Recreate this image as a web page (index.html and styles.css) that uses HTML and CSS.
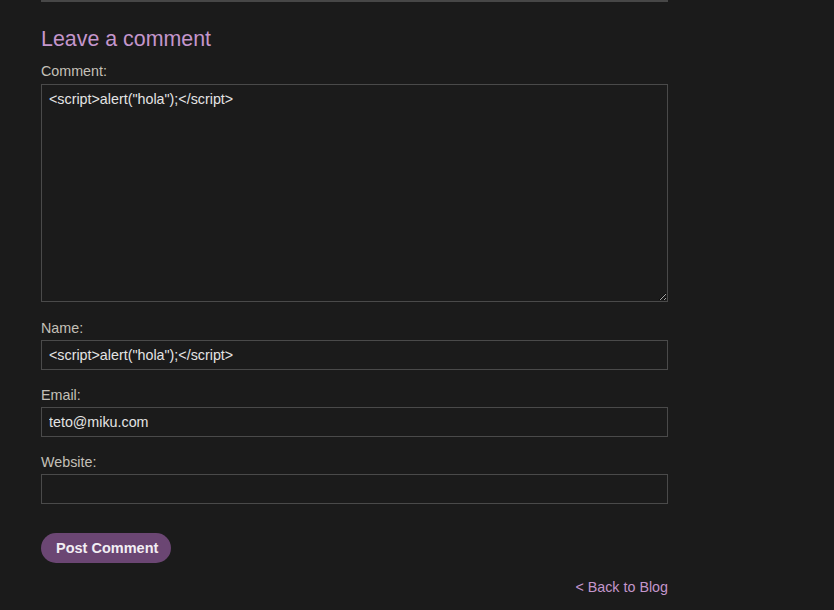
FILE: index.html
```html
<!DOCTYPE html>
<html lang="en">
<head>
<meta charset="utf-8">
<title>Leave a comment</title>
<link rel="stylesheet" href="styles.css">
</head>
<body>
<div class="page">
  <div class="main">
    <div class="divider"></div>
    <h2 class="title">Leave a comment</h2>
    <form class="comment-form">
      <div class="field field-comment">
        <label class="label" for="comment">Comment:</label>
        <textarea class="textarea" id="comment">&lt;script&gt;alert("hola");&lt;/script&gt;</textarea>
      </div>
      <div class="field">
        <label class="label" for="name">Name:</label>
        <input class="input" id="name" type="text" value="&lt;script&gt;alert(&quot;hola&quot;);&lt;/script&gt;">
      </div>
      <div class="field">
        <label class="label" for="email">Email:</label>
        <input class="input" id="email" type="text" value="teto@miku.com">
      </div>
      <div class="field">
        <label class="label" for="website">Website:</label>
        <input class="input" id="website" type="text" value="">
      </div>
      <button class="button" type="button">Post Comment</button>
    </form>
    <div class="back">
      <a class="back-link" href="#">&lt; Back to Blog</a>
    </div>
  </div>
</div>
</body>
</html>
```

FILE: styles.css
```css
html, body {
  margin: 0;
  padding: 0;
  background: #1b1b1b;
  color: #c8c8c8;
  font-family: "Liberation Sans", Arial, sans-serif;
}

.page {
  padding-left: 41px;
}

.main {
  width: 627px;
}

.divider {
  height: 2px;
  background: #474747;
}

.title {
  margin: 25px 0 12px;
  font-size: 21.4px;
  font-weight: normal;
  line-height: 24px;
  color: #c496cc;
}

.comment-form {
  display: flex;
  flex-direction: column;
}

.field {
  display: flex;
  flex-direction: column;
  margin-bottom: 17px;
}

.field-comment {
  margin-bottom: 18px;
}

.label {
  font-size: 14.3px;
  line-height: 16px;
  margin-bottom: 4px;
  color: #c4c0b8;
}

.textarea,
.input {
  box-sizing: border-box;
  width: 100%;
  margin: 0;
  background: #1b1b1b;
  border: 1px solid #4a4a4a;
  color: #e4e4e4;
  font-family: "Liberation Sans", Arial, sans-serif;
  font-size: 14.3px;
  line-height: 16px;
  padding: 6px 7px;
  outline: none;
  color-scheme: dark;
}

.textarea {
  height: 218px;
  margin-top: 1px;
  resize: both;
}

.input {
  height: 30px;
  padding: 0 7px;
}

.button {
  align-self: flex-start;
  margin-top: 12px;
  height: 30px;
  padding: 0 13px 0 15px;
  border: none;
  border-radius: 15px;
  background: #6b4673;
  color: #f2eef3;
  font-family: "Liberation Sans", Arial, sans-serif;
  font-size: 14.5px;
  font-weight: bold;
}

.back {
  display: flex;
  justify-content: flex-end;
  margin-top: 16px;
  font-size: 14.3px;
  line-height: 16px;
}

.back-link {
  color: #c496cc;
  text-decoration: none;
}
```
